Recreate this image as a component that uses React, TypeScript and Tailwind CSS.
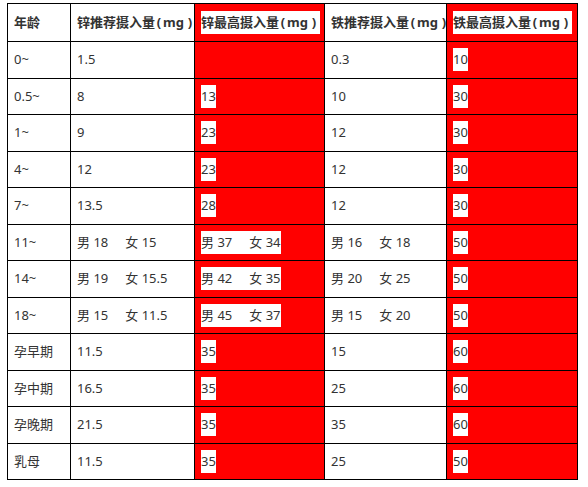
import React from "react";

type Cell = string | [string, string];

const rows: { age: string; zr: Cell; zm: Cell; fr: Cell; fm: Cell }[] = [
  { age: "0~", zr: "1.5", zm: "", fr: "0.3", fm: "10" },
  { age: "0.5~", zr: "8", zm: "13", fr: "10", fm: "30" },
  { age: "1~", zr: "9", zm: "23", fr: "12", fm: "30" },
  { age: "4~", zr: "12", zm: "23", fr: "12", fm: "30" },
  { age: "7~", zr: "13.5", zm: "28", fr: "12", fm: "30" },
  { age: "11~", zr: ["18", "15"], zm: ["37", "34"], fr: ["16", "18"], fm: "50" },
  { age: "14~", zr: ["19", "15.5"], zm: ["42", "35"], fr: ["20", "25"], fm: "50" },
  { age: "18~", zr: ["15", "11.5"], zm: ["45", "37"], fr: ["15", "20"], fm: "50" },
  { age: "孕早期", zr: "11.5", zm: "35", fr: "15", fm: "60" },
  { age: "孕中期", zr: "16.5", zm: "35", fr: "25", fm: "60" },
  { age: "孕晚期", zr: "21.5", zm: "35", fr: "35", fm: "60" },
  { age: "乳母", zr: "11.5", zm: "35", fr: "25", fm: "50" },
];

function Content({ v }: { v: Cell }) {
  if (typeof v === "string") return <>{v}</>;
  return (
    <>
      男 {v[0]}
      <span className="inline-block w-[17px]"></span>女 {v[1]}
    </>
  );
}

function Head({ label }: { label: string }) {
  return (
    <>
      {label}
      <span className="inline-block w-[8px] text-center">(</span>mg
      <span className="inline-block w-[12px] text-center">)</span>
    </>
  );
}

const td = "border border-black px-[6px] align-middle whitespace-nowrap";

export default function App() {
  return (
    <div
      className="bg-white w-[588px] h-[487px] pt-[3px] pl-[7px] text-[13px] text-[#333]"
      style={{ fontFamily: '"Noto Sans", "Noto Sans CJK SC", sans-serif' }}
    >
      <table className="border-collapse table-fixed w-[571px]">
        <colgroup>
          <col className="w-[63px]" />
          <col className="w-[124px]" />
          <col className="w-[130px]" />
          <col className="w-[122px]" />
          <col className="w-[131px]" />
        </colgroup>
        <tbody>
          <tr className="h-[38px] font-bold">
            <td className={td}>年龄</td>
            <td className={td}>
              <Head label="锌推荐摄入量" />
            </td>
            <td className={`${td} bg-[#ff0000]`}>
              <span className="inline-block bg-white leading-[23px]">
                <Head label="锌最高摄入量" />
              </span>
            </td>
            <td className={td}>
              <Head label="铁推荐摄入量" />
            </td>
            <td className={`${td} bg-[#ff0000]`}>
              <span className="inline-block bg-white leading-[23px]">
                <Head label="铁最高摄入量" />
              </span>
            </td>
          </tr>
          {rows.map((r, i) => (
            <tr key={i} className="h-[36.5px]">
              <td className={td}>{r.age}</td>
              <td className={td}>
                <Content v={r.zr} />
              </td>
              <td className={`${td} bg-[#ff0000]`}>
                {r.zm !== "" && (
                  <span className="inline-block bg-white leading-[23px]">
                    <Content v={r.zm} />
                  </span>
                )}
              </td>
              <td className={td}>
                <Content v={r.fr} />
              </td>
              <td className={`${td} bg-[#ff0000]`}>
                <span className="inline-block bg-white leading-[23px]">
                  <Content v={r.fm} />
                </span>
              </td>
            </tr>
          ))}
        </tbody>
      </table>
    </div>
  );
}
